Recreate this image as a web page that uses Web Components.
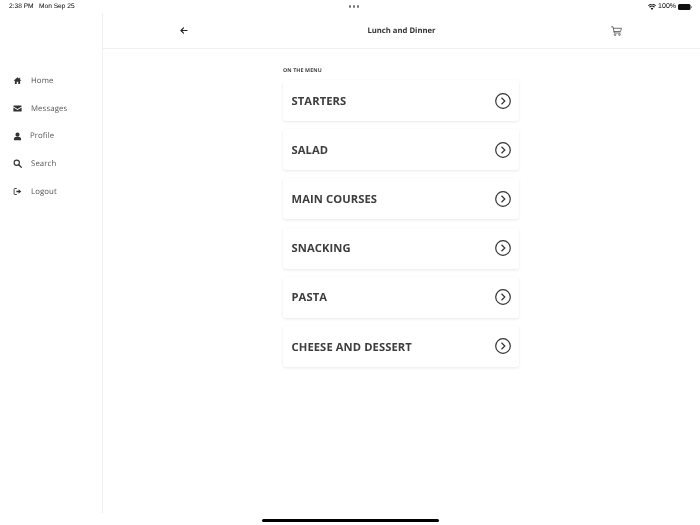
<!DOCTYPE html>
<html><head><meta charset="utf-8"><style>
html,body{margin:0;height:100%;background:#fff}
body{font-family:"Open Sans","Liberation Sans",sans-serif;width:700px;height:525px;overflow:hidden;text-rendering:geometricPrecision}
</style></head><body>
<app-shell>
<status-bar slot="status"></status-bar>
<side-nav slot="side">
<nav-item label="Home" gap="9" ><svg viewBox="0 0 24 24"><path d="M12 3 1.500 12.500H5V21h5v-6h4v6h5v-8.500h3.500L19 9.300V4.500h-2.500v2.500z" fill="#333"/></svg></nav-item>
<nav-item label="Messages" gap="9"><svg viewBox="0 0 24 24"><path fill="#333" d="M2 4h20a1 1 0 0 1 1 1v1.500l-11 7-11-7V5a1 1 0 0 1 1-1zM1 9l11 7 11-7v10a1 1 0 0 1-1 1H2a1 1 0 0 1-1-1z"/></svg></nav-item>
<nav-item label="Profile" gap="8"><svg viewBox="0 0 24 24"><circle cx="12" cy="7" r="5.500" fill="#333"/><path fill="#333" d="M2.500 22v-3.500c0-3.500 3-5 6-5h7c3 0 6 1.500 6 5V22z"/></svg></nav-item>
<nav-item label="Search" gap="9"><svg viewBox="0 0 24 24"><circle cx="10" cy="10" r="7" fill="none" stroke="#333" stroke-width="3"/><path d="m15.500 15.500 6.500 6.500" stroke="#333" stroke-width="3.400" stroke-linecap="round"/></svg></nav-item>
<nav-item label="Logout" gap="9"><svg viewBox="0 0 24 24"><path d="M9 4H5a2 2 0 0 0-2 2v12a2 2 0 0 0 2 2h4" fill="none" stroke="#333" stroke-width="2.400" stroke-linecap="round"/><path fill="#333" d="M9 10h6V6l7 6-7 6v-4H9z"/></svg></nav-item>
</side-nav>
<top-bar slot="top" title="Lunch and Dinner"></top-bar>
<menu-list slot="main" heading="ON THE MENU">
<menu-card>STARTERS</menu-card>
<menu-card>SALAD</menu-card>
<menu-card>MAIN COURSES</menu-card>
<menu-card>SNACKING</menu-card>
<menu-card>PASTA</menu-card>
<menu-card>CHEESE AND DESSERT</menu-card>
</menu-list>
<home-bar slot="home"></home-bar>
</app-shell>
<script>
function def(name,html,init){
  customElements.define(name,class extends HTMLElement{
    connectedCallback(){
      if(this.shadowRoot)return;
      const r=this.attachShadow({mode:'open'});
      r.innerHTML=html;
      if(init)init(this,r);
    }
  });
}
def('app-shell',`<style>
:host{display:grid;position:relative;width:700px;height:525px;grid-template-columns:103px 1fr;grid-template-rows:13px 36px 1fr;filter:blur(.25px)}
.s{grid-column:1/3}
.side{grid-row:2/4;border-right:1px solid #f0f0f0;margin-bottom:12px}
.top{grid-column:2;grid-row:2}
.main{grid-column:2;grid-row:3}
.home{position:absolute;left:0;right:0;bottom:0}
</style>
<div class="s"><slot name="status"></slot></div>
<div class="side"><slot name="side"></slot></div>
<div class="top"><slot name="top"></slot></div>
<div class="main"><slot name="main"></slot></div>
<div class="home"><slot name="home"></slot></div>`);
def('status-bar',`<style>
:host{display:grid;grid-template-columns:1fr auto 1fr;align-items:center;height:13px;font:500 6.600px "Liberation Sans",Arial,sans-serif;color:#000;padding:0 1px 0 9px;box-sizing:border-box;}
.l{display:flex;gap:5.500px}
.d{display:flex;gap:1.500px}
.d i{width:2.500px;height:2.500px;border-radius:50%;background:#777}
.r{display:flex;justify-content:flex-end;align-items:center;gap:2px;padding-right:7px;font-size:7px}
svg{display:block}
</style>
<div class="l"><span>2:38 PM</span><span>Mon Sep 25</span></div>
<div class="d"><i></i><i></i><i></i></div>
<div class="r"><svg width="8" height="6" viewBox="0 0 16 12"><path fill="#111" d="M8 12 5.500 9a3.500 3.500 0 0 1 5 0zM3.800 7.300 2.300 5.500a8 8 0 0 1 11.400 0l-1.500 1.800a6 6 0 0 0-8.400 0zM1.200 4.200 0 2.800a11.500 11.500 0 0 1 16 0l-1.200 1.400a10 10 0 0 0-13.600 0z"/></svg><span>100%</span><svg width="14" height="6" viewBox="0 0 14 6"><rect width="12.500" height="6" rx="1.500" fill="#111"/><rect x="13" y="2" width="1" height="2" rx=".5" fill="#888"/></svg></div>`);
def('side-nav',`<style>
:host{display:flex;flex-direction:column;padding-top:54px}
</style><slot></slot>`);
def('nav-item',`<style>
:host{display:flex;align-items:center;height:27.700px;padding-left:13px;font:500 7.800px "Open Sans",sans-serif;color:#555;letter-spacing:.1px}
.i{width:9px;height:9px;flex:none;display:block}
::slotted(svg){width:9px;height:9px;display:block}
</style><span class="i"><slot></slot></span><span class="t"></span>`,(h,r)=>{
  r.querySelector('.t').textContent=h.getAttribute('label');
  r.querySelector('.t').style.marginLeft=h.getAttribute('gap')+'px';
});
def('top-bar',`<style>
:host{display:grid;grid-template-columns:1fr auto 1fr;align-items:center;height:35px;border-bottom:1px solid #f0f0f0;font:700 7.700px "Open Sans",sans-serif;color:#333}
.a{padding-left:77px}
.c{display:flex;justify-content:flex-end;padding-right:78px}
svg{display:block}
</style>
<div class="a"><svg width="8" height="7" viewBox="0 0 18 16"><path d="M8 2 2 8l6 6M2.500 8H16" fill="none" stroke="#222" stroke-width="2.600" stroke-linecap="round" stroke-linejoin="round"/></svg></div>
<div class="t"></div>
<div class="c"><svg width="11" height="10" viewBox="0 0 22 20"><path d="M1 1.500h3l2.500 12.500h12M5 4.500h16l-2 6.500H6.500" fill="none" stroke="#444" stroke-width="1.500" stroke-linejoin="round" stroke-linecap="round"/><circle cx="8" cy="17.500" r="1.700" fill="none" stroke="#444" stroke-width="1.300"/><circle cx="17" cy="17.500" r="1.700" fill="none" stroke="#444" stroke-width="1.300"/></svg></div>`,(h,r)=>{r.querySelector('.t').textContent=h.getAttribute('title');});
def('menu-list',`<style>
:host{display:flex;flex-direction:column;width:236px;margin-left:180px;padding-top:18px}
.h{font:700 5.300px "Open Sans",sans-serif;color:#444;letter-spacing:.1px;height:13px;line-height:7px}
.l{display:flex;flex-direction:column;gap:8.200px}
</style><div class="h"></div><div class="l"><slot></slot></div>`,(h,r)=>{r.querySelector('.h').textContent=h.getAttribute('heading');});
def('menu-card',`<style>
:host{display:flex;align-items:center;justify-content:space-between;height:41px;padding:0 8px 0 8.500px;box-sizing:border-box;border-radius:3px;background:#fff;box-shadow:0 1px 3px rgba(0,0,0,.09);font:700 11.200px "Open Sans",sans-serif;color:#3d3d3d;letter-spacing:.1px}
span{position:relative;top:.6px}
svg{display:block}
</style><span><slot></slot></span><svg width="16" height="16" viewBox="0 0 16 16"><circle cx="8" cy="8" r="7.300" fill="none" stroke="#333" stroke-width="1.200"/><path d="m6.500 4.800 3.300 3.200-3.300 3.200" fill="none" stroke="#333" stroke-width="1.200"/></svg>`);
def('home-bar',`<style>
:host{display:flex;justify-content:center;height:8px}
i{width:177px;height:3px;border-radius:2px;background:#000;display:block;margin-top:2px}
</style><i></i>`);
</script>
</body></html>
